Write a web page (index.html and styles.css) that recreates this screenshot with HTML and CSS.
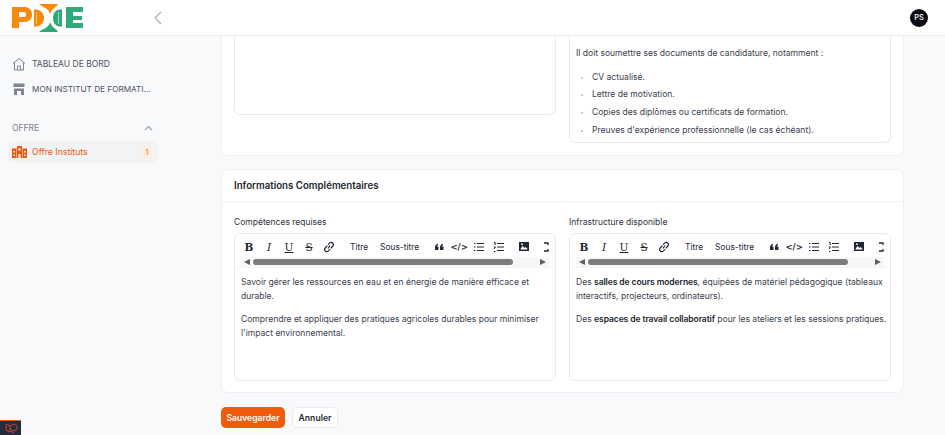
FILE: index.html
```html
<!DOCTYPE html>
<html lang="fr">
<head>
<meta charset="utf-8">
<title>PDCE</title>
<link rel="stylesheet" href="styles.css">
</head>
<body>
<header class="topbar">
  <div class="brand">
    <svg class="logo" width="72" height="28" viewBox="0 0 72 28">
      <path fill="#f58a0b" d="M0 3h13a7 7 0 0 1 7 7v1a7 7 0 0 1-7 7H7v6H0z"/>
      <path fill="#fff" d="M7 8h5a2 2 0 0 1 2 2v1a2 2 0 0 1-2 2H7z"/>
      <path fill="#f58a0b" d="M22 5.500h3c4 1 7 4 7 8.500s-3 7.500-7 8.500h-3z"/>
      <path fill="#fbc27d" d="M24 8h1v12h-1z"/>
      <path fill="#f58a0b" d="M27 0h19c-1 3-6 4-8 10-1-6-8-7-11-10z"/>
      <path fill="#2fa87a" d="M27 28h19c-1-3-6-4-8-10-1 6-8 7-11 10z"/>
      <path fill="#2fa87a" d="M50 5.500h-3c-4 1-6 4-6 8.500s2 7.500 6 8.500h3z"/>
      <path fill="#9bd8bf" d="M46 8h1v12h-1z"/>
      <path fill="#2fa87a" d="M54 3h17v5H61v4h9v4h-9v3h10v5H54z"/>
    </svg>
    <svg class="collapse" width="10" height="14" viewBox="0 0 10 14"><path d="M8 1 2 7l6 6" fill="none" stroke="#a4a8b0" stroke-width="1.100"/></svg>
  </div>
  <div class="avatar">PS</div>
</header>

<div class="shell">
  <aside class="sidebar">
    <nav class="nav">
      <a class="nav-item">
        <svg width="14" height="14" viewBox="0 0 14 14"><path d="M1 6.500 7 1.500l6 5M2.500 5.500V13h9V5.500M5.500 13V9h3v4" fill="none" stroke="#7d8494" stroke-width="1"/></svg>
        <span>TABLEAU DE BORD</span>
      </a>
      <a class="nav-item">
        <svg width="14" height="14" viewBox="0 0 14 14"><path fill="#7d8494" d="M1.500 1.500h11v3.500h-11zM2 6.500h10V13H9V9H5v4H2z"/></svg>
        <span class="nav-long">MON INSTITUT DE FORMATI...</span>
      </a>
    </nav>
    <div class="section-head">
      <span>OFFRE</span>
      <svg width="9" height="6" viewBox="0 0 9 6"><path d="M1 5l3.500-3.500L8 5" fill="none" stroke="#9a9fa8" stroke-width="1.100"/></svg>
    </div>
    <a class="offer">
      <svg width="15" height="12" viewBox="0 0 15 12"><path fill="#e8590c" d="M0 2.500h4.500V12H0zM10.500 2.500H15V12h-4.500zM5 0h5v12H5z"/><path fill="#fff" d="M1.500 5h1.500v1.500H1.500zM1.500 8.500h1.500V10H1.500zM12 5h1.500v1.500H12zM12 8.500h1.500V10H12zM6.500 2.500h2v2h-2zM6.500 8h2v4h-2z"/></svg>
      <span class="offer-label">Offre Instituts</span>
      <span class="count">1</span>
    </a>
  </aside>

  <main class="content">
    <section class="card card-top">
      <div class="columns">
        <div class="box box-left"></div>
        <div class="box box-right prose">
          <p>Il doit soumettre ses documents de candidature, notamment :</p>
          <ul>
            <li>CV actualisé.</li>
            <li>Lettre de motivation.</li>
            <li>Copies des diplômes ou certificats de formation.</li>
            <li>Preuves d'expérience professionnelle (le cas échéant).</li>
          </ul>
        </div>
      </div>
    </section>

    <section class="card card-info">
      <h2 class="card-title">Informations Complémentaires</h2>
      <div class="columns columns-info">
        <div class="field">
          <label class="field-label">Compétences requises</label>
          <div class="editor">
            <div class="toolbar">
              <span class="tool t-b">B</span><span class="tool t-i">I</span><span class="tool t-u">U</span><span class="tool t-s">S</span>
              <svg class="tool-svg" width="20" height="12" viewBox="0 0 20 12"><path d="M9 7.500 11 4.500M8.300 4.700 6.200 7a2.200 2.200 0 0 0 3.100 3.100L11 8.300M11.700 7.300l2.100-2.300a2.200 2.200 0 0 0-3.100-3.100L9 3.700" fill="none" stroke="#222836" stroke-width="1.200"/></svg>
              <span class="tool-text first">Titre</span><span class="tool-text">Sous-titre</span>
              <svg class="tool-svg quote" width="20" height="8" viewBox="0 0 20 8"><path fill="#222836" d="M6 7V4.200C6 2.400 7 1.200 9 .8v1.400c-.8.200-1.200.6-1.300 1.300H9.500V7zM11 7V4.200C11 2.400 12 1.200 14 .8v1.400c-.8.200-1.200.6-1.300 1.300h1.800V7z"/></svg>
              <span class="tool t-c">&lt;/&gt;</span>
              <svg class="tool-svg" width="20" height="10" viewBox="0 0 20 10"><path d="M8 1.500h7M8 5h7M8 8.500h7M5 1.500h1.500M5 5h1.500M5 8.500h1.500" stroke="#222836" stroke-width="1.100"/></svg>
              <svg class="tool-svg" width="20" height="10" viewBox="0 0 20 10"><path d="M8 1.500h7M8 5h7M8 8.500h7M5 .5h1.200v2.500M5 5h1.500L5 7M5 9.500h1.500" stroke="#222836" stroke-width="1" fill="none"/></svg>
              <svg class="tool-svg img" width="10" height="9" viewBox="0 0 10 9"><path fill="#222836" d="M0 0h10v9H0z"/><path fill="#fff" d="M1.500 7 3.500 4l2 2 1-1 2 2v.5h-7z"/><circle cx="3" cy="2.200" r=".9" fill="#fff"/></svg>
              <svg class="tool-svg cut" width="6" height="10" viewBox="0 0 6 10"><path d="M0 1h4v2M0 9h4V7" fill="none" stroke="#222836" stroke-width="1.300"/></svg>
            </div>
            <div class="scrollbar"><span class="arrow-l"></span><span class="thumb"></span><span class="arrow-r"></span></div>
            <div class="prose editor-body">
              <p>Savoir gérer les ressources en eau et en énergie de manière efficace et durable.</p>
              <p>Comprendre et appliquer des pratiques agricoles durables pour minimiser l'impact environnemental.</p>
            </div>
          </div>
        </div>
        <div class="field">
          <label class="field-label">Infrastructure disponible</label>
          <div class="editor">
            <div class="toolbar">
              <span class="tool t-b">B</span><span class="tool t-i">I</span><span class="tool t-u">U</span><span class="tool t-s">S</span>
              <svg class="tool-svg" width="20" height="12" viewBox="0 0 20 12"><path d="M9 7.500 11 4.500M8.300 4.700 6.200 7a2.200 2.200 0 0 0 3.100 3.100L11 8.300M11.700 7.300l2.100-2.300a2.200 2.200 0 0 0-3.100-3.100L9 3.700" fill="none" stroke="#222836" stroke-width="1.200"/></svg>
              <span class="tool-text first">Titre</span><span class="tool-text">Sous-titre</span>
              <svg class="tool-svg quote" width="20" height="8" viewBox="0 0 20 8"><path fill="#222836" d="M6 7V4.200C6 2.400 7 1.200 9 .8v1.400c-.8.200-1.200.6-1.300 1.300H9.500V7zM11 7V4.200C11 2.400 12 1.200 14 .8v1.400c-.8.200-1.200.6-1.300 1.300h1.800V7z"/></svg>
              <span class="tool t-c">&lt;/&gt;</span>
              <svg class="tool-svg" width="20" height="10" viewBox="0 0 20 10"><path d="M8 1.500h7M8 5h7M8 8.500h7M5 1.500h1.500M5 5h1.500M5 8.500h1.500" stroke="#222836" stroke-width="1.100"/></svg>
              <svg class="tool-svg" width="20" height="10" viewBox="0 0 20 10"><path d="M8 1.500h7M8 5h7M8 8.500h7M5 .5h1.200v2.500M5 5h1.500L5 7M5 9.500h1.500" stroke="#222836" stroke-width="1" fill="none"/></svg>
              <svg class="tool-svg img" width="10" height="9" viewBox="0 0 10 9"><path fill="#222836" d="M0 0h10v9H0z"/><path fill="#fff" d="M1.500 7 3.500 4l2 2 1-1 2 2v.5h-7z"/><circle cx="3" cy="2.200" r=".9" fill="#fff"/></svg>
              <svg class="tool-svg cut" width="6" height="10" viewBox="0 0 6 10"><path d="M0 1h4v2M0 9h4V7" fill="none" stroke="#222836" stroke-width="1.300"/></svg>
            </div>
            <div class="scrollbar"><span class="arrow-l"></span><span class="thumb"></span><span class="arrow-r"></span></div>
            <div class="prose editor-body">
              <p>Des <strong>salles de cours modernes</strong>, équipées de matériel pédagogique (tableaux interactifs, projecteurs, ordinateurs).</p>
              <p>Des <strong>espaces de travail collaboratif</strong> pour les ateliers et les sessions pratiques.</p>
            </div>
          </div>
        </div>
      </div>
    </section>

    <div class="actions">
      <button class="btn btn-primary">Sauvegarder</button>
      <button class="btn btn-secondary">Annuler</button>
    </div>
  </main>
</div>

<div class="debugbar">
  <svg width="14" height="12" viewBox="0 0 14 12"><path d="M2 2l4 2v5l4 2M6 4l4-2 3 2v3l-3 2-4-2M2 2v6l4 2" fill="none" stroke="#c9442b" stroke-width="1"/></svg>
</div>
</body>
</html>
```

FILE: styles.css
```css
* { box-sizing: border-box; }

html, body {
  margin: 0;
  height: 435px;
  overflow: hidden;
}

body {
  position: relative;
  background: #f8f9fb;
  color: #2e3440;
  font-family: "Inter", "Noto Sans", "Liberation Sans", sans-serif;
  font-size: 8.6px;
}

.topbar {
  height: 36px;
  background: #fff;
  border-bottom: 1px solid #eceef1;
  display: flex;
  align-items: center;
  justify-content: space-between;
  padding: 0 17px 0 12px;
}

.brand {
  display: flex;
  align-items: center;
  gap: 69px;
}

.logo { display: block; }
.collapse { display: block; }

.avatar {
  width: 18px;
  height: 18px;
  border-radius: 50%;
  background: #0a0a14;
  color: #fff;
  font-size: 7.5px;
  font-weight: 500;
  line-height: 18px;
  text-align: center;
}

.shell {
  display: flex;
  height: 399px;
}

.sidebar {
  width: 221px;
  flex: none;
  padding: 21px 63px 0 8px;
}

.nav {
  display: flex;
  flex-direction: column;
  gap: 11px;
}

.nav-item {
  display: flex;
  align-items: center;
  gap: 6px;
  padding-left: 4px;
  height: 14px;
  color: #4c5260;
  font-size: 8.5px;
  white-space: nowrap;
}

.nav-long { font-size: 8.2px; }

.nav-item svg, .offer svg { flex: none; }

.section-head {
  display: flex;
  align-items: center;
  justify-content: space-between;
  margin-top: 25px;
  padding: 0 5px 0 4px;
  color: #7b808c;
  font-size: 8.5px;
  height: 14px;
}

.offer {
  display: flex;
  align-items: center;
  margin-top: 6px;
  height: 22px;
  padding: 0 5px 0 4px;
  gap: 5px;
  background: #f2f3f5;
  border-radius: 5px;
  color: #e8590c;
  font-size: 8.7px;
}

.offer-label { flex: 1; }

.count {
  width: 12px;
  height: 12px;
  border-radius: 3px;
  background: #fdf0e3;
  color: #e8801c;
  font-size: 8px;
  line-height: 12px;
  text-align: center;
}

.content {
  width: 683px;
  flex: none;
}

.card {
  background: #fff;
  border: 1px solid #eef0f3;
  border-radius: 7px;
}

.card-top {
  height: 120px;
  border-top: 0;
  border-top-left-radius: 0;
  border-top-right-radius: 0;
  padding: 0 12px;
}

.columns {
  display: grid;
  grid-template-columns: 322px 322px;
  column-gap: 13px;
}

.box {
  border: 1px solid #e8eaee;
  border-top: 0;
  border-radius: 0 0 6px 6px;
  background: #fff;
}

.box-left { height: 79px; }
.box-right { height: 107px; padding: 11px 6px 0; }

.prose {
  font-size: 8.55px;
  line-height: 13.5px;
  color: #3a404c;
}

.prose p { margin: 0; }

.prose ul {
  list-style: none;
  margin: 10px 0 0;
  padding: 0 0 0 16px;
}

.prose li {
  position: relative;
  margin-bottom: 4.200px;
}

.prose li::before {
  content: "";
  position: absolute;
  left: -11px;
  top: 6px;
  width: 2px;
  height: 2px;
  background: #c9ccd2;
}

.card-info {
  margin-top: 13px;
  height: 224px;
}

.card-title {
  margin: 0;
  height: 32px;
  padding: 0 12px;
  border-bottom: 1px solid #eef0f3;
  font-size: 9.7px;
  line-height: 31px;
  font-weight: 600;
  color: #23272f;
}

.columns-info {
  padding: 13px 12px 0;
}

.field-label {
  display: block;
  height: 18px;
  font-size: 8.5px;
  line-height: 15px;
  color: #2e3440;
}

.editor {
  height: 148px;
  border: 1px solid #e8eaee;
  border-radius: 6px;
  background: #fff;
  overflow: hidden;
}

.toolbar {
  display: flex;
  align-items: center;
  height: 23px;
  padding: 2px 0 0 4px;
  color: #222836;
  white-space: nowrap;
  overflow: hidden;
}

.tool {
  flex: none;
  width: 20px;
  text-align: center;
  font-family: "DejaVu Serif", "Liberation Serif", serif;
  font-size: 10.5px;
  line-height: 12px;
}

.t-b { font-weight: 700; }
.t-i { font-style: italic; }
.t-u { text-decoration: underline; }
.t-s { text-decoration: line-through; }

.t-c {
  width: 20px;
  font-family: "DejaVu Sans", sans-serif;
  font-size: 8.5px;
  font-weight: 700;
}

.tool-svg { flex: none; display: block; }
.tool-svg.quote { margin-left: 10px; }
.tool-svg.img { margin-left: 10px; }
.tool-svg.cut { margin-left: 15px; }

.tool-text {
  flex: none;
  font-size: 8.4px;
  margin-left: 12px;
}

.tool-text.first { margin-left: 11px; }

.scrollbar {
  display: flex;
  align-items: center;
  height: 10px;
  margin: 0 6px;
  padding: 0 3px;
  background: #f7f7f8;
}

.arrow-l, .arrow-r {
  flex: none;
  width: 0;
  height: 0;
  border-top: 3.500px solid transparent;
  border-bottom: 3.500px solid transparent;
}

.arrow-l { border-right: 6px solid #5f5f5f; }
.arrow-r { border-left: 6px solid #5f5f5f; margin-left: auto; }

.thumb {
  flex: none;
  width: 260px;
  height: 6px;
  margin-left: 3px;
  border-radius: 3px;
  background: #7c7c7c;
}

.editor-body {
  padding: 8px 0 0 6px;
  border-top: 1px solid #f3f4f6;
}

.editor-body p + p { margin-top: 10px; }
.editor-body strong { font-weight: 600; letter-spacing: -.1px; color: #23272f; }

.actions {
  display: flex;
  gap: 7px;
  margin-top: 14px;
}

.btn {
  height: 21px;
  border-radius: 5px;
  font-family: inherit;
  font-size: 8.6px;
  font-weight: 600;
  padding: 0;
}

.btn-primary {
  width: 64px;
  background: #ee5b0c;
  border: 0;
  color: #fff;
}

.btn-secondary {
  width: 46px;
  background: #fff;
  border: 1px solid #e8eaee;
  color: #23272f;
}

.debugbar {
  position: absolute;
  left: 0;
  bottom: 0;
  width: 21px;
  height: 15px;
  background: #252b3a;
  border-top: 1px solid #e8590c;
  display: flex;
  align-items: center;
  justify-content: center;
}
```
